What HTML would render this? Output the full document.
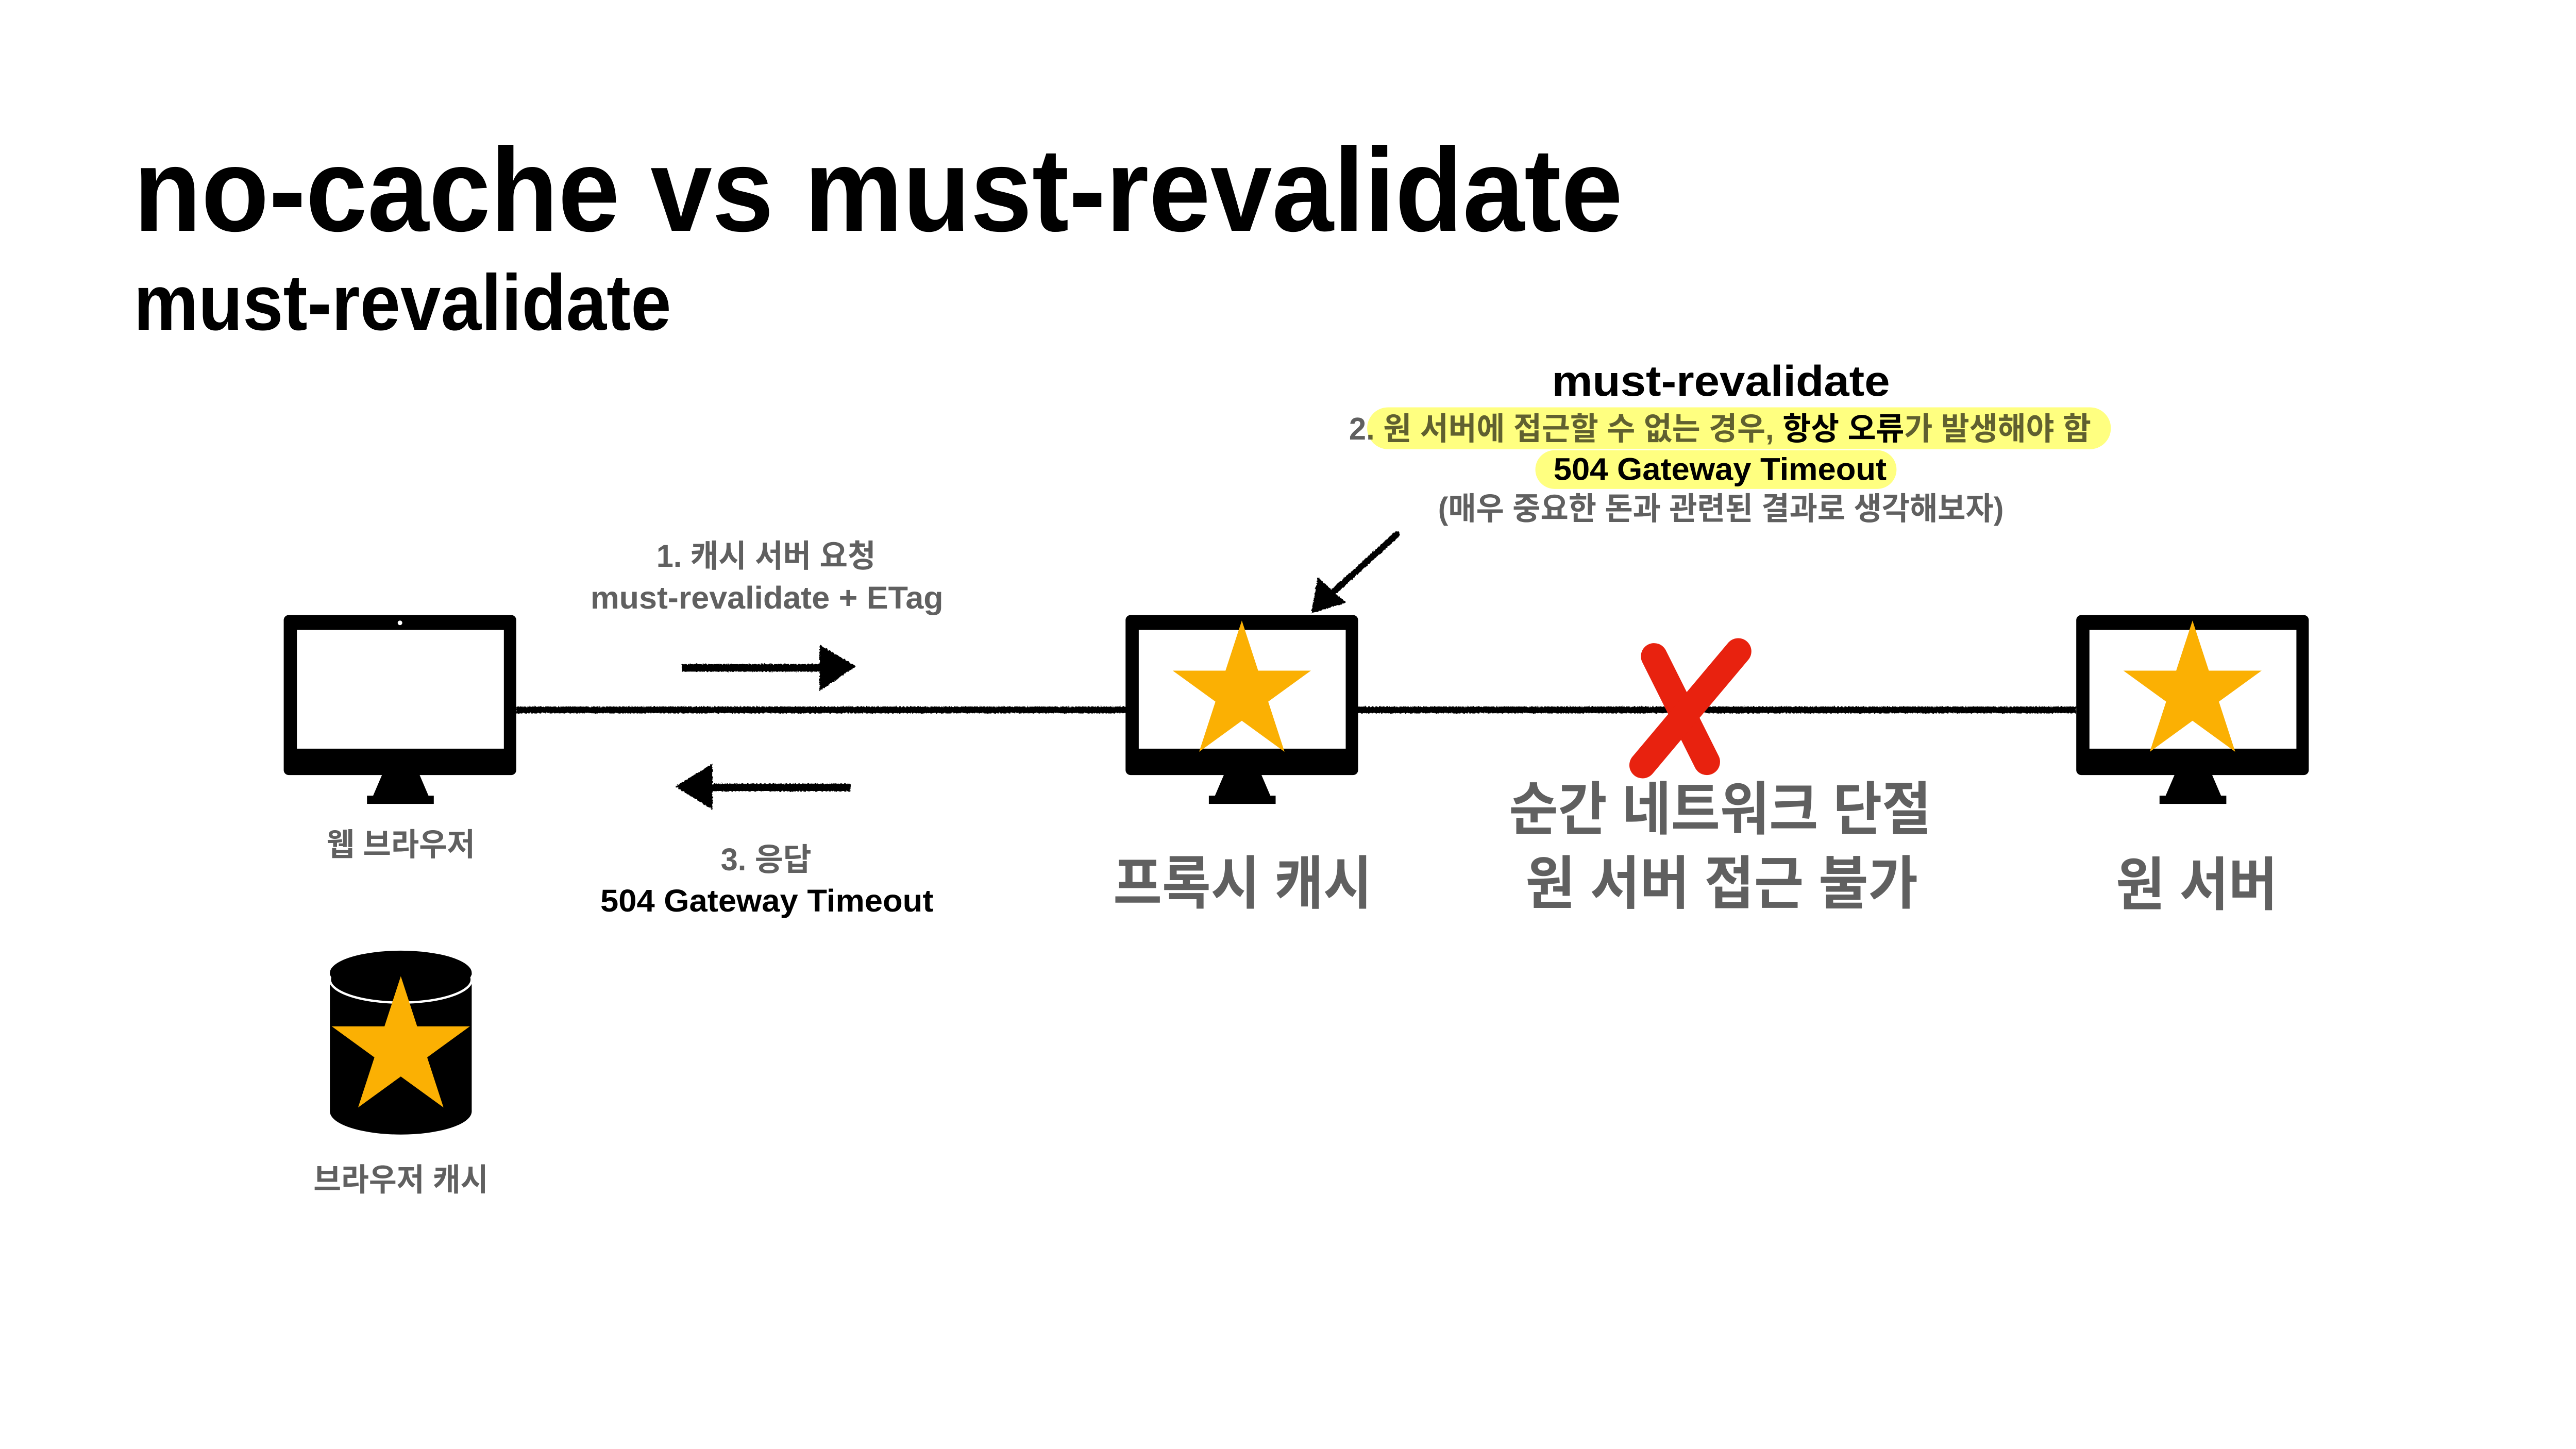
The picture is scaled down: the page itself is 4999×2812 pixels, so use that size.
<!DOCTYPE html>
<html><head><meta charset="utf-8"><style>
html,body{margin:0;padding:0;background:#fff;width:4999px;height:2812px;overflow:hidden}
svg{display:block}
.k{font-family:"Liberation Sans","Noto Sans CJK KR",sans-serif}
</style></head><body>
<svg width="4999" height="2812" viewBox="0 0 1562 878.7" xmlns="http://www.w3.org/2000/svg">
<defs>
<filter id="rough" x="-5%" y="-50%" width="110%" height="200%">
<feTurbulence type="fractalNoise" baseFrequency="0.9" numOctaves="2" seed="3" result="n"/>
<feDisplacementMap in="SourceGraphic" in2="n" scale="1.6" xChannelSelector="R" yChannelSelector="G"/>
</filter>
<path id="star" d="M0,-44 L9.9,-13.6 L41.9,-13.6 L16,5.2 L25.9,35.6 L0,16.8 L-25.9,35.6 L-16,5.2 L-41.9,-13.6 L-9.9,-13.6Z" fill="#fbb003"/>
<g id="mon">
<rect x="0" y="0" width="141" height="97" rx="3" fill="#000"/>
<rect x="8" y="9" width="125.5" height="72" fill="#fff"/>
<polygon points="60,96 82,96 88,110 54,110" fill="#000"/>
<rect x="50.5" y="109.5" width="40.5" height="5" fill="#000"/>
</g>
</defs>

<text x="81" y="140" class="k" font-size="72" font-weight="bold" textLength="903" lengthAdjust="spacingAndGlyphs">no-cache vs must-revalidate</text>
<text x="81" y="200" class="k" font-size="48" font-weight="bold" textLength="326" lengthAdjust="spacingAndGlyphs">must-revalidate</text>

<text x="941" y="240" class="k" font-size="26" font-weight="bold" textLength="205" lengthAdjust="spacingAndGlyphs">must-revalidate</text>
<text x="818" y="266.5" class="k" font-size="19" font-weight="bold" fill="#606060" textLength="450" lengthAdjust="spacingAndGlyphs">2. 원 서버에 접근할 수 없는 경우, <tspan fill="#000">항상 오류</tspan>가 발생해야 함</text>
<text x="942" y="291" class="k" font-size="19" font-weight="bold" textLength="202" lengthAdjust="spacingAndGlyphs">504 Gateway Timeout</text>
<rect x="829" y="247" width="451" height="25.4" rx="12.7" fill="#ffff80" style="mix-blend-mode:multiply"/>
<rect x="931" y="273" width="219" height="23.5" rx="11.7" fill="#ffff80" style="mix-blend-mode:multiply"/>
<text x="872" y="315" class="k" font-size="19" font-weight="bold" fill="#606060" textLength="343" lengthAdjust="spacingAndGlyphs">(매우 중요한 돈과 관련된 결과로 생각해보자)</text>

<g filter="url(#rough)">
<line x1="313" y1="430.5" x2="683" y2="430.5" stroke="#000" stroke-width="4"/>
<line x1="823" y1="430.5" x2="1259" y2="430.5" stroke="#000" stroke-width="4"/>
<line x1="413.5" y1="405" x2="500" y2="405" stroke="#000" stroke-width="4.6"/>
<polygon points="497,391 519,404 497,419" fill="#000"/>
<line x1="430" y1="477.5" x2="515.5" y2="477.5" stroke="#000" stroke-width="4.6"/>
<polygon points="432,463 409.5,477 432,491" fill="#000"/>
<line x1="847" y1="324" x2="803" y2="364" stroke="#000" stroke-width="3.8" stroke-linecap="round"/>
<polygon points="799,350 816,365.5 795,372" fill="#000"/>
</g>

<use href="#mon" x="172" y="373"/>
<circle cx="242.5" cy="377.7" r="1.4" fill="#fff"/>
<use href="#mon" x="682.5" y="373"/>
<use href="#star" x="753" y="420.3"/>
<use href="#mon" x="1259" y="373"/>
<use href="#star" x="1329.5" y="420.3"/>

<g stroke="#e8220f" stroke-width="16" stroke-linecap="round" fill="none">
<line x1="1003" y1="398" x2="1035" y2="462"/>
<line x1="1054" y1="395" x2="996" y2="464"/>
</g>

<rect x="200" y="590" width="86" height="84" fill="#000"/>
<ellipse cx="243" cy="674" rx="43" ry="14" fill="#000"/>
<ellipse cx="243" cy="594" rx="43" ry="14" fill="none" stroke="#fff" stroke-width="1.4"/>
<ellipse cx="243" cy="590" rx="43" ry="13.5" fill="#000"/>
<use href="#star" x="243" y="636"/>

<text x="398" y="343.8" class="k" font-size="19" font-weight="bold" fill="#606060" textLength="133" lengthAdjust="spacingAndGlyphs">1. 캐시 서버 요청</text>
<text x="358" y="369" class="k" font-size="19" font-weight="bold" fill="#606060" textLength="214" lengthAdjust="spacingAndGlyphs">must-revalidate + ETag</text>
<text x="198" y="518.7" class="k" font-size="19" font-weight="bold" fill="#606060" textLength="90" lengthAdjust="spacingAndGlyphs">웹 브라우저</text>
<text x="437" y="527.8" class="k" font-size="19" font-weight="bold" fill="#606060" textLength="55" lengthAdjust="spacingAndGlyphs">3. 응답</text>
<text x="364" y="552.8" class="k" font-size="19" font-weight="bold" textLength="202" lengthAdjust="spacingAndGlyphs">504 Gateway Timeout</text>
<text x="675" y="548" class="k" font-size="35" font-weight="bold" fill="#606060" textLength="157" lengthAdjust="spacingAndGlyphs">프록시 캐시</text>
<text x="915" y="503" class="k" font-size="35" font-weight="bold" fill="#606060" textLength="256" lengthAdjust="spacingAndGlyphs">순간 네트워크 단절</text>
<text x="925" y="548" class="k" font-size="35" font-weight="bold" fill="#606060" textLength="238" lengthAdjust="spacingAndGlyphs">원 서버 접근 불가</text>
<text x="1283" y="548.7" class="k" font-size="35" font-weight="bold" fill="#606060" textLength="98" lengthAdjust="spacingAndGlyphs">원 서버</text>
<text x="190" y="722" class="k" font-size="19" font-weight="bold" fill="#606060" textLength="106" lengthAdjust="spacingAndGlyphs">브라우저 캐시</text>
</svg>
</body></html>
